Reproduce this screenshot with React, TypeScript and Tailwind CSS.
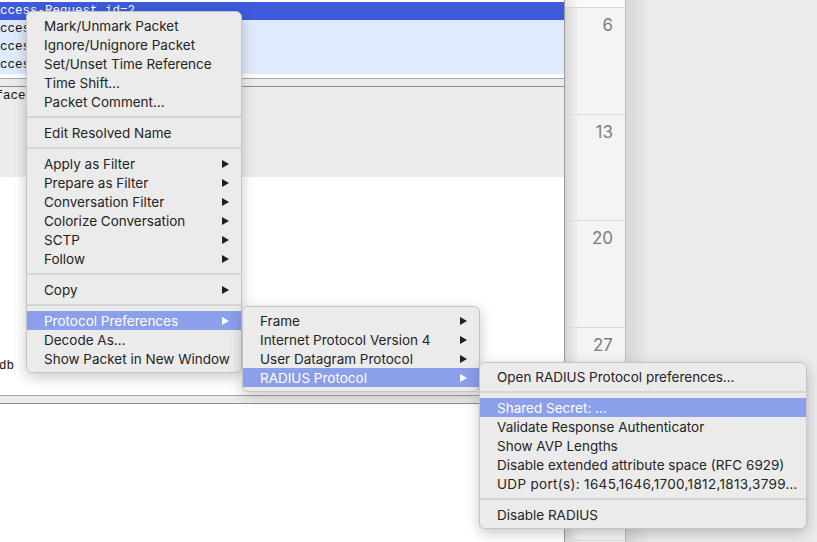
import React from "react";

type Item =
  | { kind: "item"; label: string; arrow?: boolean; active?: boolean; wide?: boolean }
  | { kind: "sep" };

const mainMenu: Item[] = [
  { kind: "item", label: "Mark/Unmark Packet" },
  { kind: "item", label: "Ignore/Unignore Packet" },
  { kind: "item", label: "Set/Unset Time Reference" },
  { kind: "item", label: "Time Shift…" },
  { kind: "item", label: "Packet Comment…" },
  { kind: "sep" },
  { kind: "item", label: "Edit Resolved Name" },
  { kind: "sep" },
  { kind: "item", label: "Apply as Filter", arrow: true },
  { kind: "item", label: "Prepare as Filter", arrow: true },
  { kind: "item", label: "Conversation Filter", arrow: true },
  { kind: "item", label: "Colorize Conversation", arrow: true },
  { kind: "item", label: "SCTP", arrow: true },
  { kind: "item", label: "Follow", arrow: true },
  { kind: "sep" },
  { kind: "item", label: "Copy", arrow: true },
  { kind: "sep" },
  { kind: "item", label: "Protocol Preferences", arrow: true, active: true },
  { kind: "item", label: "Decode As…" },
  { kind: "item", label: "Show Packet in New Window" },
];

const subMenu1: Item[] = [
  { kind: "item", label: "Frame", arrow: true },
  { kind: "item", label: "Internet Protocol Version 4", arrow: true },
  { kind: "item", label: "User Datagram Protocol", arrow: true },
  { kind: "item", label: "RADIUS Protocol", arrow: true, active: true },
];

const subMenu2: Item[] = [
  { kind: "item", label: "Open RADIUS Protocol preferences…" },
  { kind: "sep" },
  { kind: "item", label: "Shared Secret: …", active: true },
  { kind: "item", label: "Validate Response Authenticator" },
  { kind: "item", label: "Show AVP Lengths" },
  { kind: "item", label: "Disable extended attribute space (RFC 6929)" },
  { kind: "item", label: "UDP port(s): 1645,1646,1700,1812,1813,3799…", wide: true },
  { kind: "sep" },
  { kind: "item", label: "Disable RADIUS" },
];

function Arrow({ white }: { white?: boolean }) {
  return (
    <svg width="7" height="8" viewBox="0 0 7 8" className="shrink-0">
      <polygon points="0,0 7,4 0,8" fill={white ? "#ffffff" : "#1f1f1f"} />
    </svg>
  );
}

function Menu({ items, className }: { items: Item[]; className: string }) {
  return (
    <div
      className={
        "absolute flex flex-col pt-[4px] pb-[4px] rounded-[6px] bg-[#ebebeb] border border-[#c4c4c4] shadow-[0_4px_14px_rgba(0,0,0,0.22)] " +
        className
      }
    >
      {items.map((it, i) =>
        it.kind === "sep" ? (
          <div key={i} className="h-[12px] flex items-center">
            <div className="h-[2px] w-full bg-[#d6d6d6]" />
          </div>
        ) : (
          <div
            key={i}
            className={
              "h-[19px] flex items-center justify-between pl-[17px] pr-[12px] text-[13.5px] leading-[19px] whitespace-nowrap " +
              (it.active ? "bg-[#8b9fea] text-white" : "text-[#242424]")
            }
          >
            <span className={"pt-[1px] " + (it.wide ? "tracking-[0.32px]" : "")}>{it.label}</span>
            {it.arrow ? <Arrow white={it.active} /> : null}
          </div>
        )
      )}
    </div>
  );
}

export default function App() {
  const mono = "font-['Liberation_Mono',monospace] text-[12.5px]";
  return (
    <div className="relative w-[817px] h-[542px] overflow-hidden flex bg-white font-['Inter','Noto_Sans',sans-serif]">
      {/* Wireshark window */}
      <div className="w-[565px] shrink-0 flex flex-col border-r border-[#9a9a9a] bg-white">
        <div className="h-[2px] bg-white" />
        <div className={"h-[18px] bg-[#3d5bdb] text-white leading-[18px] pl-0 whitespace-nowrap overflow-hidden " + mono}>
          <span className="ml-[-7.5px]">Access-Request id=2</span>
        </div>
        {["Access-Accept id=2", "Access-Request id=3", "Access-Accept id=3"].map((t) => (
          <div key={t} className={"h-[18px] bg-[#dfeafd] text-[#111] leading-[18px] whitespace-nowrap overflow-hidden " + mono}>
            <span className="ml-[-7.5px]">{t}</span>
          </div>
        ))}
        <div className="h-[4px] bg-white" />
        <div className="h-[1px] bg-[#a6a6a6]" />
        <div className="h-[7px] bg-[#ececec]" />
        <div className="h-[1px] bg-[#8e8e8e]" />
        <div className="h-[90px] bg-[#ececec] overflow-hidden">
          <div className={"h-[18px] leading-[18px] text-[#111] whitespace-nowrap " + mono}>
            <span className="ml-[-42px]">Interface id: 0 (en0)</span>
          </div>
        </div>
        <div className="h-[218px] bg-white overflow-hidden pt-[180px]">
          <div className={"h-[18px] leading-[18px] text-[#111] whitespace-nowrap " + mono}>
            <span className="ml-[-1px]">db</span>
          </div>
        </div>
        <div className="h-[1px] bg-[#a6a6a6]" />
        <div className="h-[7px] bg-[#ececec]" />
        <div className="h-[1px] bg-[#8e8e8e]" />
        <div className="flex-1 bg-white" />
      </div>

      {/* Calendar column */}
      <div className="w-[61px] shrink-0 flex flex-col border-r border-[#bdbdbd] bg-[linear-gradient(to_right,#d6d6d6,#f4f4f4_14px)]">
        <div className="h-[8px] border-b border-[#d6d6d6] bg-[linear-gradient(to_right,#e2e2e2,#fafafa_14px)]" />
        {["6", "13", "20", "27", ""].map((n, i) => (
          <div
            key={i}
            className="h-[106.7px] shrink-0 border-b border-[#dadada] flex justify-end pr-[12px] pt-[6px] text-[17px] leading-[22px] text-[#7d7d7d]"
          >
            {n}
          </div>
        ))}
      </div>

      {/* Right area */}
      <div className="flex-1 bg-[linear-gradient(to_right,#d7d7d7,#ebebeb_24px)]" />

      {/* Menus */}
      <Menu items={mainMenu} className="left-[26px] top-[11px] w-[216px]" />
      <Menu items={subMenu1} className="left-[242px] top-[306px] w-[238px]" />
      <Menu items={subMenu2} className="left-[479px] top-[362px] w-[328px]" />
    </div>
  );
}
